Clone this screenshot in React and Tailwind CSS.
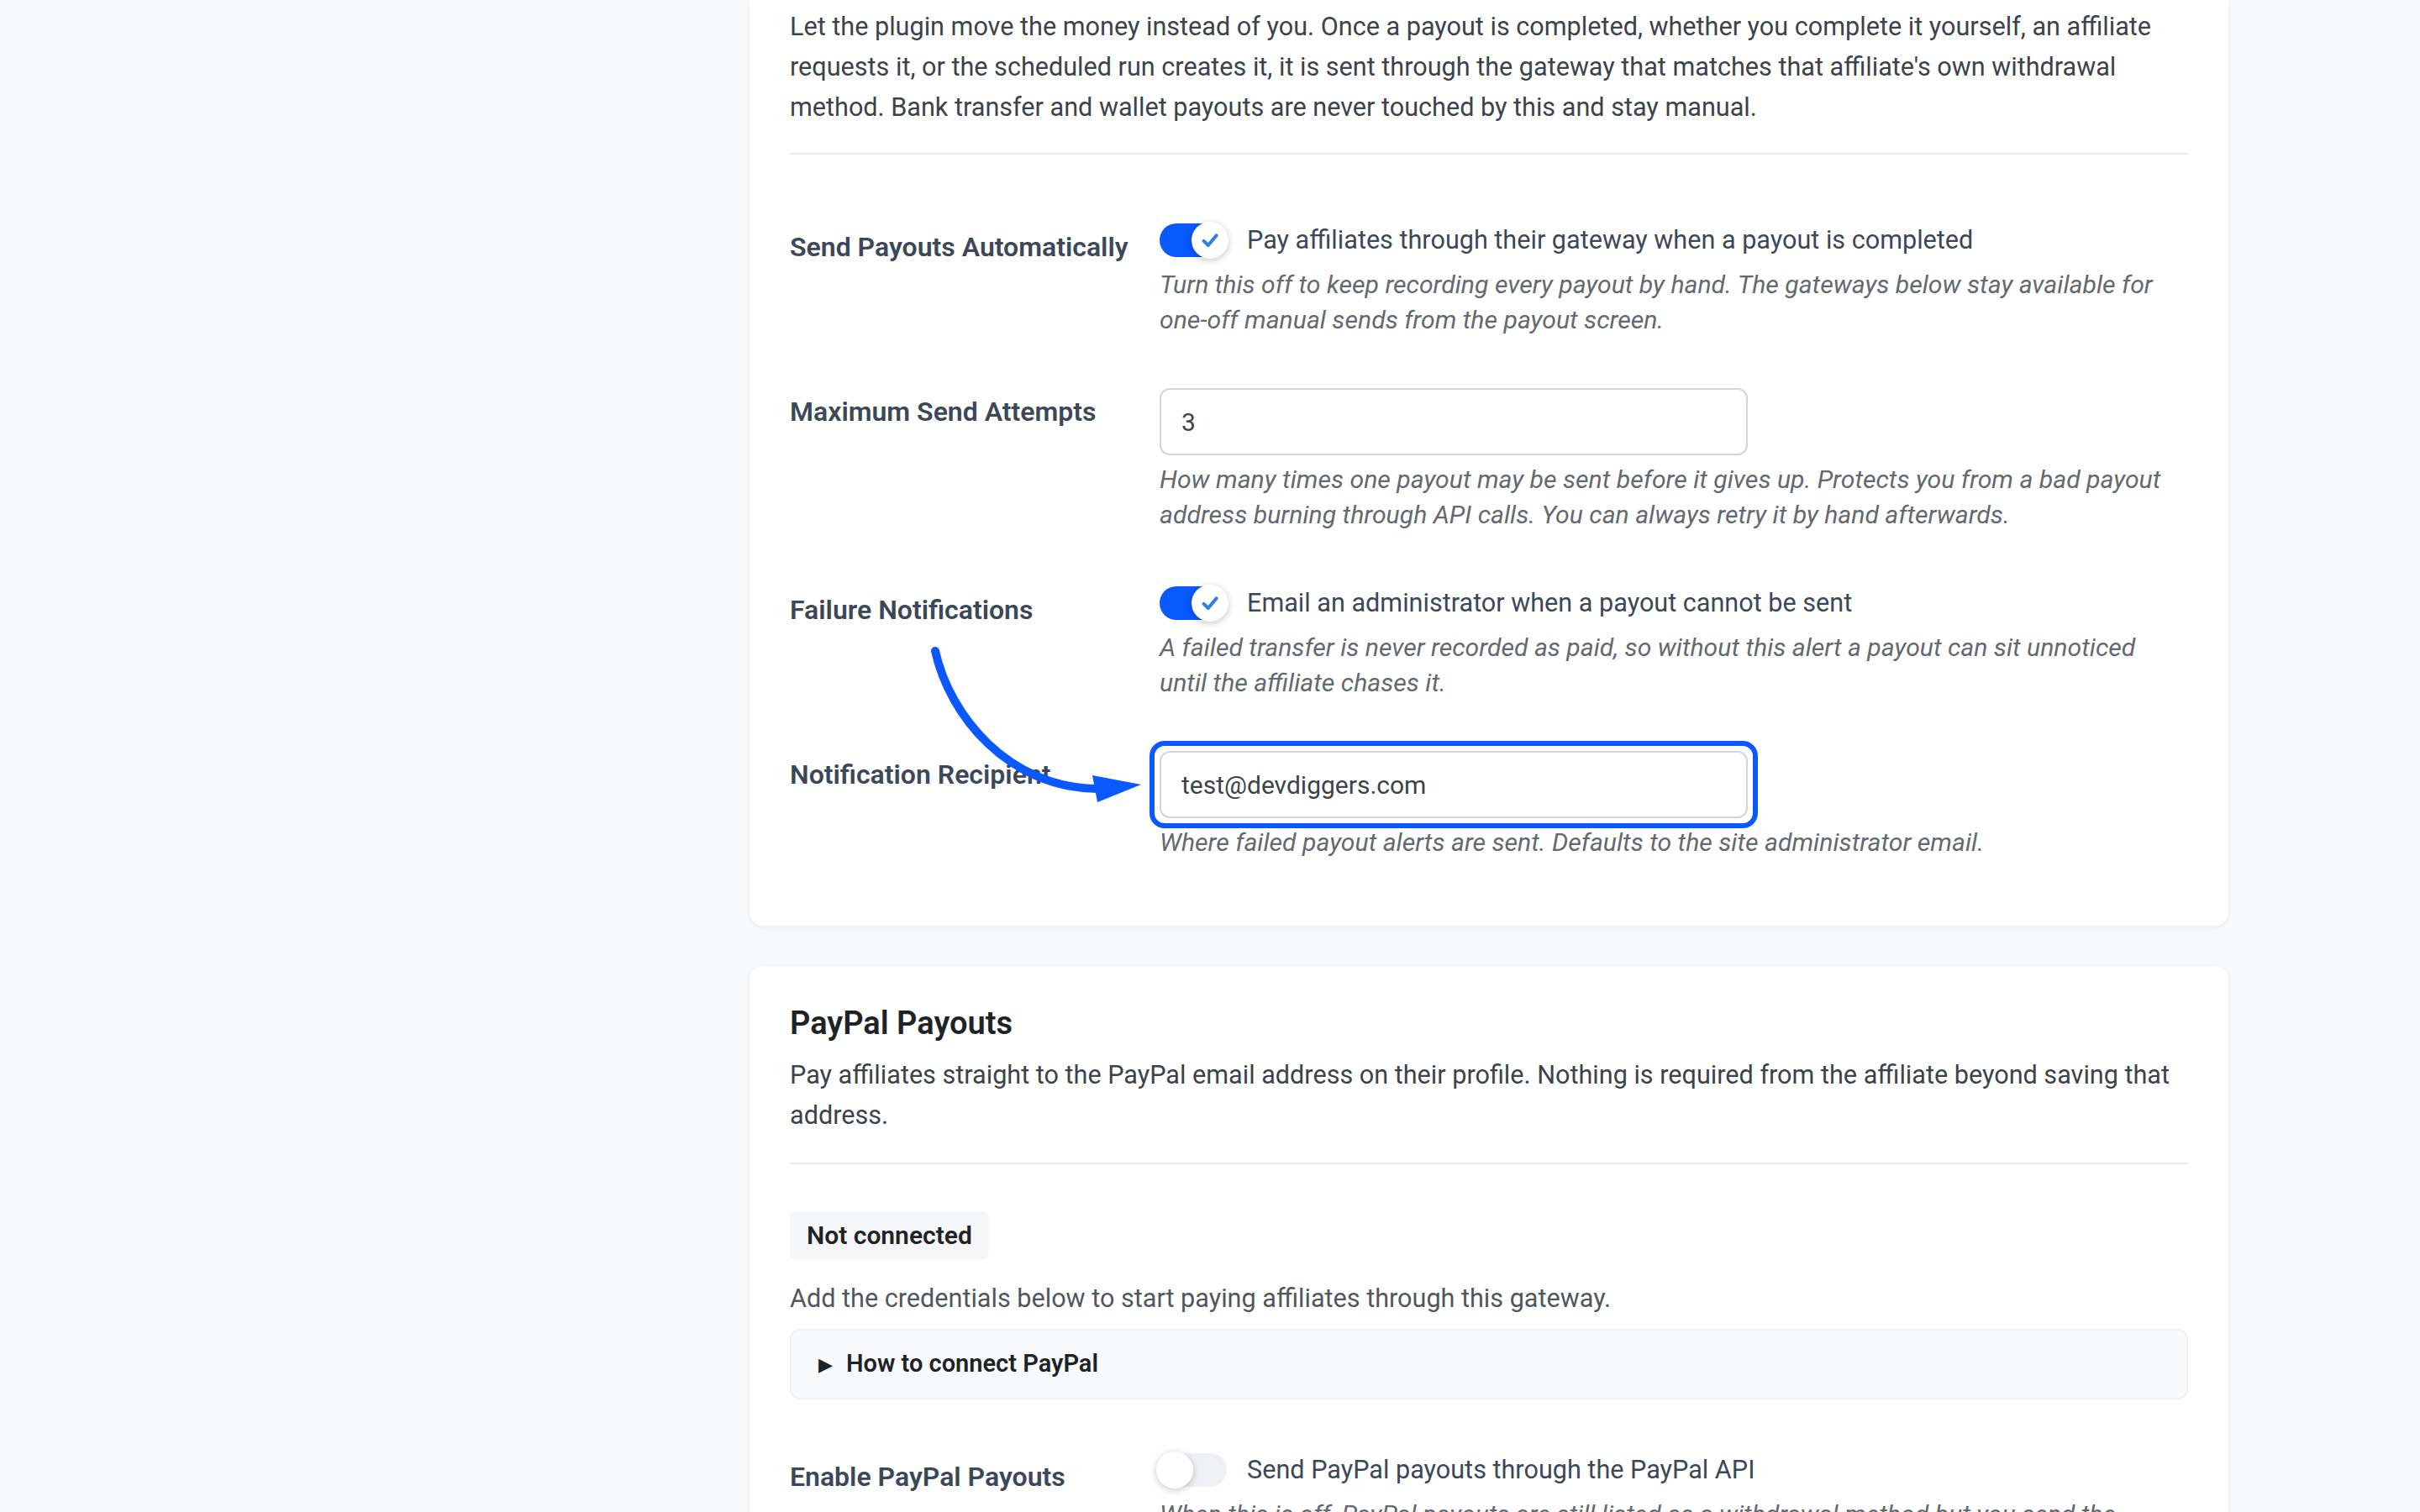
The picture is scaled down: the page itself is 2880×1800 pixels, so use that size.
import React from "react";

function Check() {
  return (
    <svg viewBox="0 0 12 12" className="h-[12px] w-[12px]" fill="none">
      <path d="M2.3 6.4 L4.9 9 L9.8 3.2" stroke="#2f7fe0" strokeWidth="2" strokeLinecap="round" strokeLinejoin="round" />
    </svg>
  );
}

function Toggle({ on }) {
  return (
    <span className={on ? "relative inline-flex h-5 w-10 shrink-0 rounded-full bg-[#0a58ff]" : "relative inline-flex h-5 w-10 shrink-0 rounded-full bg-[#eef0f3]"}>
      <span className={on ? "absolute -right-px top-1/2 flex h-[22px] w-[22px] -translate-y-1/2 items-center justify-center rounded-full bg-white shadow-[0_1px_4px_rgba(0,0,0,0.22)]" : "absolute -left-0.5 top-1/2 flex h-[22px] w-[22px] -translate-y-1/2 items-center justify-center rounded-full bg-white shadow-[0_1px_4px_rgba(0,0,0,0.22)]"}>
        {on && <Check />}
      </span>
    </span>
  );
}

function Row({ label, labelTop = "pt-[19px]", children }) {
  return (
    <div className="grid grid-cols-[220px_1fr]">
      <div className={`${labelTop} text-base leading-6 font-semibold text-[#3c4858]`}>{label}</div>
      <div className="py-[15px]">{children}</div>
    </div>
  );
}

function ToggleLine({ on, children }) {
  return (
    <div className="flex h-6 items-center gap-3">
      <Toggle on={on} />
      <span className="text-[15.3px] leading-6 text-[#3c4858]">{children}</span>
    </div>
  );
}

function Desc({ children, className = "mt-1" }) {
  return <p className={`${className} text-[15.1px] leading-[21px] italic text-[#646970]`}>{children}</p>;
}

function TextInput({ value }) {
  return (
    <input
      readOnly
      value={value}
      className="block h-10 w-[350px] rounded-md border border-[#d2d6dc] bg-white px-3 text-[15px] text-[#3c434a] outline-none"
    />
  );
}

export default function App() {
  return (
    <div className="[zoom:2] h-[900px] w-[1440px] overflow-hidden bg-[#f8f9fb] font-['Roboto',sans-serif]">
      <div className="ml-[446px] w-[880px]">
        {/* Automatic payouts card */}
        <div className="rounded-b-lg bg-white px-6 pt-1 pb-6 shadow-[0_1px_3px_rgba(0,0,0,0.06)]">
          <p className="text-[15.3px] leading-6 text-[#3c434a]">
            Let the plugin move the money instead of you. Once a payout is completed, whether you complete it yourself, an affiliate
            requests it, or the scheduled run creates it, it is sent through the gateway that matches that affiliate's own withdrawal
            method. Bank transfer and wallet payouts are never touched by this and stay manual.
          </p>
          <div className="mt-[15px] border-b border-[#e8eaed]" />

          <div className="mt-6">
            <Row label="Send Payouts Automatically">
              <ToggleLine on>Pay affiliates through their gateway when a payout is completed</ToggleLine>
              <Desc>
                Turn this off to keep recording every payout by hand. The gateways below stay available for one-off manual sends
                from the payout screen.
              </Desc>
            </Row>

            <Row label="Maximum Send Attempts" labelTop="pt-[17px]">
              <TextInput value="3" />
              <Desc>
                How many times one payout may be sent before it gives up. Protects you from a bad payout address burning through API
                calls. You can always retry it by hand afterwards.
              </Desc>
            </Row>

            <Row label="Failure Notifications">
              <ToggleLine on>Email an administrator when a payout cannot be sent</ToggleLine>
              <Desc>
                A failed transfer is never recorded as paid, so without this alert a payout can sit unnoticed until the affiliate
                chases it.
              </Desc>
            </Row>

            <div className="relative">
              <Row label="Notification Recipient" labelTop="pt-[17px]">
                <div className="relative w-[350px]">
                  <TextInput value="test@devdiggers.com" />
                  <div className="pointer-events-none absolute -inset-[6px] rounded-[9px] border-[3px] border-[#0a58ff]" />
                </div>
                <Desc>Where failed payout alerts are sent. Defaults to the site administrator email.</Desc>
              </Row>

              {/* annotation arrow */}
              <svg className="pointer-events-none absolute left-[70px] -top-[61px] h-[120px] w-[160px]" viewBox="0 0 160 120" fill="none">
                <path d="M16.5 16.5 C25 55 60 98 113 98.5" stroke="#0a58ff" strokeWidth="5" strokeLinecap="round" />
                <path d="M110 90.5 L139 96 L113 106.5 Z" fill="#0a58ff" />
              </svg>
            </div>
          </div>
        </div>

        {/* PayPal card */}
        <div className="mt-6 rounded-t-lg bg-white px-6 pt-5 pb-6 shadow-[0_1px_3px_rgba(0,0,0,0.06)]">
          <h2 className="text-[19px] leading-7 font-semibold text-[#1d2327]">PayPal Payouts</h2>
          <p className="mt-[5px] text-[15.3px] leading-6 text-[#3c434a]">
            Pay affiliates straight to the PayPal email address on their profile. Nothing is required from the affiliate beyond saving
            that address.
          </p>
          <div className="mt-4 border-b border-[#e8eaed]" />

          <span className="mt-7 inline-block rounded bg-[#f5f6f7] px-[10px] py-[4px] text-[15px] leading-[21px] font-semibold text-[#1d2327]">
            Not connected
          </span>
          <p className="mt-[11px] text-[15.3px] leading-6 text-[#50575e]">
            Add the credentials below to start paying affiliates through this gateway.
          </p>
          <div className="mt-1.5 flex h-[42px] items-center gap-2 rounded-md border border-[#eef0f2] bg-[#f9fafb] px-4">
            <span className="text-[11px] text-[#1d2327]">▶</span>
            <span className="text-[14.5px] font-semibold text-[#1d2327]">How to connect PayPal</span>
          </div>

          <div className="mt-[15px]">
            <Row label="Enable PayPal Payouts">
              <ToggleLine on={false}>Send PayPal payouts through the PayPal API</ToggleLine>
              <Desc>
                When this is off, PayPal payouts are still listed as a withdrawal method but you send the money yourself from your
                PayPal account.
              </Desc>
            </Row>
          </div>
        </div>
      </div>
    </div>
  );
}
